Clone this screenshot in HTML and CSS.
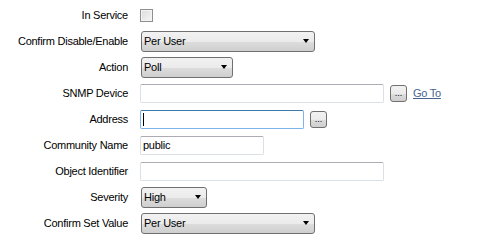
FILE: index.html
```html
<!DOCTYPE html>
<html lang="en">
<head>
  <meta charset="UTF-8" />
  <title>Monitor Settings</title>
  <link rel="stylesheet" href="styles.css">
</head>
<body>
  <form class="settings">
    <label class="lbl">In Service</label>
    <div class="field"><span class="check"></span></div>

    <label class="lbl">Confirm Disable/Enable</label>
    <div class="field"><div class="combo w-wide"><span>Per User</span><i class="arrow"></i></div></div>

    <label class="lbl">Action</label>
    <div class="field"><div class="combo w-mid"><span>Poll</span><i class="arrow"></i></div></div>

    <label class="lbl">SNMP Device</label>
    <div class="field">
      <div class="text w-long"></div>
      <button type="button" class="dots">...</button>
      <a href="#" class="goto">Go To</a>
    </div>

    <label class="lbl">Address</label>
    <div class="field">
      <div class="text w-addr focus"><span class="caret"></span></div>
      <button type="button" class="dots">...</button>
    </div>

    <label class="lbl">Community Name</label>
    <div class="field"><div class="text w-short">public</div></div>

    <label class="lbl">Object Identifier</label>
    <div class="field"><div class="text w-long"></div></div>

    <label class="lbl">Severity</label>
    <div class="field"><div class="combo w-small"><span>High</span><i class="arrow"></i></div></div>

    <label class="lbl">Confirm Set Value</label>
    <div class="field"><div class="combo w-wide"><span>Per User</span><i class="arrow"></i></div></div>
  </form>
</body>
</html>
```

FILE: styles.css
```css
body {
  margin: 0;
  background: #fff;
  font-family: "Liberation Sans", Arial, sans-serif;
  font-size: 11px;
  letter-spacing: -0.25px;
  color: #000;
}
.settings {
  display: grid;
  grid-template-columns: 128px 1fr;
  grid-auto-rows: 26px;
  column-gap: 12px;
  padding-top: 2px;
}
.lbl {
  display: flex;
  align-items: center;
  justify-content: flex-end;
  white-space: nowrap;
}
.field {
  display: flex;
  align-items: center;
  gap: 6px;
}
.check {
  width: 11px;
  height: 11px;
  border: 1px solid #8e8f8f;
  background: linear-gradient(135deg, #dcdcdc, #f6f6f6);
  box-shadow: inset 0 0 0 1px #f4f4f4;
}
.combo {
  box-sizing: border-box;
  height: 21px;
  margin-left: 1px;
  border: 1px solid #707070;
  border-radius: 3px;
  background: linear-gradient(#f2f2f2 0%, #ebebeb 50%, #dddddd 51%, #cfcfcf 100%);
  display: flex;
  align-items: center;
  justify-content: space-between;
  padding: 0 5px 0 2px;
}
.arrow {
  width: 0;
  height: 0;
  border-left: 3.5px solid transparent;
  border-right: 3.5px solid transparent;
  border-top: 4px solid #000;
}
.w-wide { width: 174px; }
.w-mid { width: 92px; }
.w-small { width: 66px; }
.text {
  box-sizing: border-box;
  height: 19px;
  border: 1px solid #dbdfe6;
  border-top-color: #abadb3;
  border-radius: 2px;
  padding: 0 2px;
  display: flex;
  align-items: center;
}
.text.focus {
  border-color: #7eb4ea;
  border-top-color: #3d7bad;
}
.caret {
  width: 1px;
  height: 13px;
  background: #000;
}
.w-long { width: 244px; }
.w-addr { width: 164px; }
.w-short { width: 124px; }
.dots {
  box-sizing: border-box;
  width: 17px;
  height: 17px;
  padding: 0 0 3px;
  border: 1px solid #707070;
  border-radius: 3px;
  background: linear-gradient(#f2f2f2 0%, #ebebeb 50%, #dddddd 51%, #cfcfcf 100%);
  font: inherit;
  font-size: 9px;
  line-height: 1;
  display: flex;
  align-items: flex-end;
  justify-content: center;
}
.goto {
  color: #46648f;
  text-decoration: underline;
}
```
